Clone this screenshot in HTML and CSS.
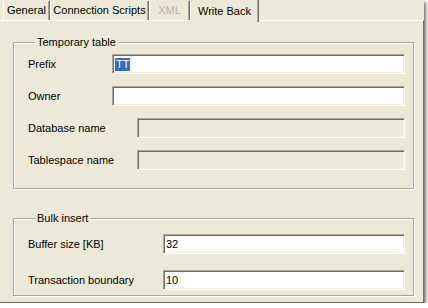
FILE: index.html
```html
<!DOCTYPE html>
<html>
<head>
<meta charset="utf-8">
<link rel="stylesheet" href="styles.css">
</head>
<body>
<div class="window">
  <div class="tabs">
    <div class="tab t-general">General</div>
    <div class="tab t-conn">Connection Scripts</div>
    <div class="tab t-xml disabled">XML</div>
    <div class="tab t-wb active">Write Back</div>
  </div>
  <div class="panel">
    <fieldset class="group g-temp">
      <legend>Temporary table</legend>
      <div class="row"><span class="label l-short">Prefix</span><div class="input"><span class="sel">TT</span></div></div>
      <div class="row"><span class="label l-short">Owner</span><div class="input"></div></div>
      <div class="row"><span class="label l-mid">Database name</span><div class="input disabled"></div></div>
      <div class="row"><span class="label l-mid">Tablespace name</span><div class="input disabled"></div></div>
    </fieldset>
    <fieldset class="group g-bulk">
      <legend>Bulk insert</legend>
      <div class="row"><span class="label l-long">Buffer size [KB]</span><div class="input">32</div></div>
      <div class="row"><span class="label l-long">Transaction boundary</span><div class="input">10</div></div>
    </fieldset>
  </div>
</div>
</body>
</html>
```

FILE: styles.css
```css
html, body {
  margin: 0;
  padding: 0;
  background: #ffffff;
}
body {
  font-family: "Liberation Sans", Arial, sans-serif;
  font-size: 11px;
  color: #000;
}
.window {
  width: 424px;
  height: 303px;
  background: #ece9d8;
  display: flex;
  flex-direction: column;
  box-shadow: 2px 2px 3px rgba(0, 0, 0, 0.55);
}
.tabs {
  display: flex;
  height: 20px;
  padding-left: 3px;
  align-items: stretch;
  position: relative;
  z-index: 2;
}
.tab {
  box-sizing: border-box;
  height: 19px;
  margin-top: 1px;
  line-height: 19px;
  text-align: center;
  border-left: 1px solid #ffffff;
  border-right: 1px solid #716f64;
  box-shadow: inset -1px 0 0 #aca899;
}
.t-general { width: 47px; }
.t-conn { width: 99px; }
.t-xml { width: 41px; }
.t-wb { width: 69px; }
.tab.disabled {
  color: #b5b2a2;
}
.tab.active {
  height: 22px;
  margin-top: 0;
  line-height: 22px;
  margin-left: 0;
  background: #ece9d8;
  padding-bottom: 2px;
}
.panel {
  flex: 1;
  box-sizing: border-box;
  border-top: 1px solid #ffffff;
  border-right: 1px solid #716f64;
  border-bottom: 1px solid #716f64;
  padding: 15px 9px 0 13px;
  display: flex;
  flex-direction: column;
  gap: 23px;
}
.group {
  margin: 0;
  padding: 0 8px 0 14px;
  border: 1px solid #aca899;
  box-shadow: inset 1px 1px 0 #ffffff, 1px 1px 0 #ffffff;
  min-width: 0;
}
.group legend {
  margin-left: 7px;
  padding: 0 2px;
  line-height: 13px;
  background: #ece9d8;
}
.g-temp {
  display: flex;
  flex-direction: column;
  gap: 12px;
  padding-top: 5px;
  padding-bottom: 18px;
}
.g-bulk {
  display: flex;
  flex-direction: column;
  gap: 16px;
  padding-top: 9px;
  padding-bottom: 5px;
}
.row {
  display: flex;
  align-items: center;
  height: 20px;
}
.label {
  flex: none;
}
.l-short { width: 84px; }
.l-mid { width: 109px; }
.l-long { width: 135px; }
.input {
  flex: 1;
  box-sizing: border-box;
  height: 20px;
  background: #ffffff;
  border: 1px solid;
  border-color: #aca899 #ffffff #ffffff #aca899;
  box-shadow: inset 1px 1px 0 #716f64, inset -1px -1px 0 #f1efe2;
  padding: 2px 0 0 2px;
  line-height: 14px;
}
.input.disabled {
  background: #ece9d8;
}
.sel {
  display: inline-block;
  background: #316ac5;
  color: #ffffff;
  line-height: 13px;
  padding: 0 1px;
}
```
